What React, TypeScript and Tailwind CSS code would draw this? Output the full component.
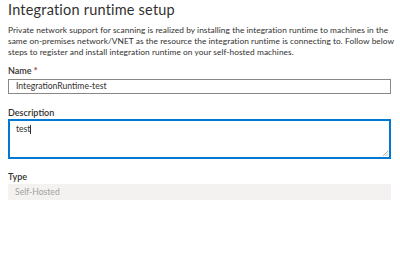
export default function App() {
  return (
    <div className="w-[400px] h-[275px] bg-white overflow-hidden text-[#323130]" style={{ fontFamily: 'Lato, "Open Sans", sans-serif' }}>
      <div className="pl-[8px] pr-[9px] pt-[1px]">
        <h1 className="text-[14.5px] leading-[18px] font-normal tracking-[0.2px]">Integration runtime setup</h1>

        <p className="mt-[6px] text-[8.35px] leading-[11px] whitespace-nowrap tracking-[0.05px]">
          Private network support for scanning is realized by installing the integration runtime to machines in the
          <br />
          same on-premises network/VNET as the resource the integration runtime is connecting to. Follow below
          <br />
          steps to register and install integration runtime on your self-hosted machines.
        </p>

        <div className="mt-[7px]">
          <div className="text-[9px] leading-[12px] font-semibold">
            Name <span className="text-[#a4262c]">*</span>
          </div>
          <div className="mt-[2px] h-[15px] border border-[#8a8886] flex items-center px-[7px] text-[8.6px]">
            IntegrationRuntime-test
          </div>
        </div>

        <div className="mt-[13px]">
          <div className="text-[9px] leading-[12px] font-semibold">Description</div>
          <div className="relative h-[40px] border-2 border-[#0078d4] px-[6px] pt-[3px] text-[8.6px] leading-[11px]">
            <span>test</span>
            <span className="inline-block w-[1px] h-[9px] bg-[#323130] align-middle"></span>
            <svg className="absolute right-[1px] bottom-[1px]" width="6" height="6" viewBox="0 0 6 6">
              <path d="M6 1L1 6M6 3.5L3.5 6" stroke="#a19f9d" strokeWidth="0.8" />
            </svg>
          </div>
        </div>

        <div className="mt-[12px]">
          <div className="text-[9px] leading-[12px] font-semibold">Type</div>
          <div className="mt-[1px] h-[16px] bg-[#f3f2f1] flex items-center px-[7px] text-[8.6px] text-[#a19f9d]">
            Self-Hosted
          </div>
        </div>
      </div>
    </div>
  );
}
